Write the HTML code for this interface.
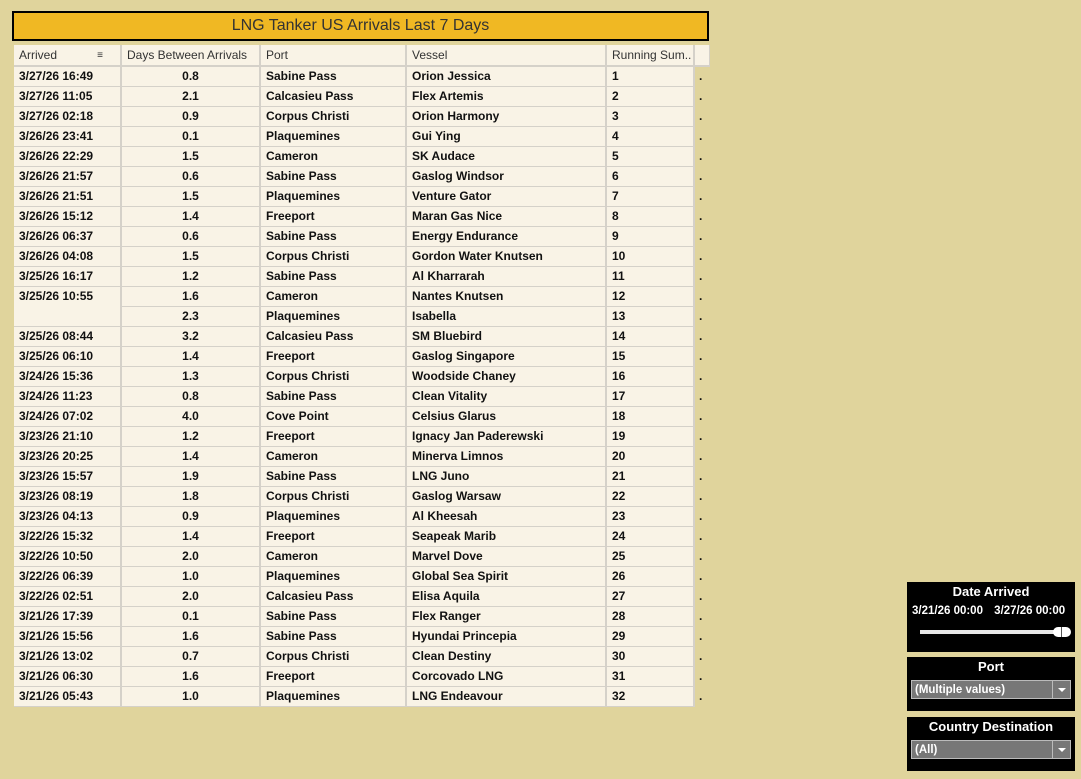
<!DOCTYPE html>
<html><head><meta charset="utf-8"><style>
*{margin:0;padding:0;box-sizing:border-box}
body{width:1081px;height:779px;background:#e0d49c;font-family:"Liberation Sans",sans-serif;position:relative;overflow:hidden}
.title{position:absolute;left:12px;top:11px;width:697px;height:30px;background:#f0b823;border:2px solid #000;text-align:center;font-size:16px;line-height:26px;color:#333}
table{position:absolute;left:14px;top:45px;border-collapse:collapse;table-layout:fixed;width:695px}
td{height:20px;border:1px solid #d5d1c9;border-width:0 2px 1px 0;background:#f9f3e6;font-size:12px;font-weight:bold;color:#111;padding:0 5px;white-space:nowrap;overflow:hidden;line-height:19px}
tr.h td{font-weight:normal;color:#333;height:21px;border-bottom:2px solid #d5d1c9}
td.c{text-align:center}
td.x{background:#e0d49c;border:0;padding:0 0 0 4px;font-weight:bold}
tr.h td.x{background:#f9f3e6;border-right:1px solid #d5d1c9}
.box{position:absolute;left:907px;width:168px;background:#000;color:#fff;font-weight:bold}
.box .t{text-align:center;font-size:13px;margin-top:2px}
.sel{position:absolute;left:4px;right:4px;height:19px;background:#777;border:1px solid #bbb;font-size:11.5px;line-height:19px;padding-left:3px;color:#fff}
.sel .a{position:absolute;right:0;top:0;width:18px;height:17px;border-left:1px solid #bbb}
.sel .a:after{content:"";position:absolute;left:5px;top:7px;border:4px solid transparent;border-top:4px solid #fff}
</style></head><body>
<div class="title">LNG Tanker US Arrivals Last 7 Days</div>
<table>
<colgroup><col style="width:107px"><col style="width:139px"><col style="width:146px"><col style="width:200px"><col style="width:88px"><col style="width:15px"></colgroup>
<tr class="h"><td>Arrived<span style="float:right;margin-right:12px;font-size:10px">&#8801;</span></td><td>Days Between Arrivals</td><td>Port</td><td>Vessel</td><td>Running Sum..</td><td class="x"></td></tr>
<tr><td>3/27/26 16:49</td><td class="c">0.8</td><td>Sabine Pass</td><td>Orion Jessica</td><td>1</td><td class="x">.</td></tr>
<tr><td>3/27/26 11:05</td><td class="c">2.1</td><td>Calcasieu Pass</td><td>Flex Artemis</td><td>2</td><td class="x">.</td></tr>
<tr><td>3/27/26 02:18</td><td class="c">0.9</td><td>Corpus Christi</td><td>Orion Harmony</td><td>3</td><td class="x">.</td></tr>
<tr><td>3/26/26 23:41</td><td class="c">0.1</td><td>Plaquemines</td><td>Gui Ying</td><td>4</td><td class="x">.</td></tr>
<tr><td>3/26/26 22:29</td><td class="c">1.5</td><td>Cameron</td><td>SK Audace</td><td>5</td><td class="x">.</td></tr>
<tr><td>3/26/26 21:57</td><td class="c">0.6</td><td>Sabine Pass</td><td>Gaslog Windsor</td><td>6</td><td class="x">.</td></tr>
<tr><td>3/26/26 21:51</td><td class="c">1.5</td><td>Plaquemines</td><td>Venture Gator</td><td>7</td><td class="x">.</td></tr>
<tr><td>3/26/26 15:12</td><td class="c">1.4</td><td>Freeport</td><td>Maran Gas Nice</td><td>8</td><td class="x">.</td></tr>
<tr><td>3/26/26 06:37</td><td class="c">0.6</td><td>Sabine Pass</td><td>Energy Endurance</td><td>9</td><td class="x">.</td></tr>
<tr><td>3/26/26 04:08</td><td class="c">1.5</td><td>Corpus Christi</td><td>Gordon Water Knutsen</td><td>10</td><td class="x">.</td></tr>
<tr><td>3/25/26 16:17</td><td class="c">1.2</td><td>Sabine Pass</td><td>Al Kharrarah</td><td>11</td><td class="x">.</td></tr>
<tr><td rowspan="2" style="vertical-align:top">3/25/26 10:55</td><td class="c">1.6</td><td>Cameron</td><td>Nantes Knutsen</td><td>12</td><td class="x">.</td></tr>
<tr><td class="c">2.3</td><td>Plaquemines</td><td>Isabella</td><td>13</td><td class="x">.</td></tr>
<tr><td>3/25/26 08:44</td><td class="c">3.2</td><td>Calcasieu Pass</td><td>SM Bluebird</td><td>14</td><td class="x">.</td></tr>
<tr><td>3/25/26 06:10</td><td class="c">1.4</td><td>Freeport</td><td>Gaslog Singapore</td><td>15</td><td class="x">.</td></tr>
<tr><td>3/24/26 15:36</td><td class="c">1.3</td><td>Corpus Christi</td><td>Woodside Chaney</td><td>16</td><td class="x">.</td></tr>
<tr><td>3/24/26 11:23</td><td class="c">0.8</td><td>Sabine Pass</td><td>Clean Vitality</td><td>17</td><td class="x">.</td></tr>
<tr><td>3/24/26 07:02</td><td class="c">4.0</td><td>Cove Point</td><td>Celsius Glarus</td><td>18</td><td class="x">.</td></tr>
<tr><td>3/23/26 21:10</td><td class="c">1.2</td><td>Freeport</td><td>Ignacy Jan Paderewski</td><td>19</td><td class="x">.</td></tr>
<tr><td>3/23/26 20:25</td><td class="c">1.4</td><td>Cameron</td><td>Minerva Limnos</td><td>20</td><td class="x">.</td></tr>
<tr><td>3/23/26 15:57</td><td class="c">1.9</td><td>Sabine Pass</td><td>LNG Juno</td><td>21</td><td class="x">.</td></tr>
<tr><td>3/23/26 08:19</td><td class="c">1.8</td><td>Corpus Christi</td><td>Gaslog Warsaw</td><td>22</td><td class="x">.</td></tr>
<tr><td>3/23/26 04:13</td><td class="c">0.9</td><td>Plaquemines</td><td>Al Kheesah</td><td>23</td><td class="x">.</td></tr>
<tr><td>3/22/26 15:32</td><td class="c">1.4</td><td>Freeport</td><td>Seapeak Marib</td><td>24</td><td class="x">.</td></tr>
<tr><td>3/22/26 10:50</td><td class="c">2.0</td><td>Cameron</td><td>Marvel Dove</td><td>25</td><td class="x">.</td></tr>
<tr><td>3/22/26 06:39</td><td class="c">1.0</td><td>Plaquemines</td><td>Global Sea Spirit</td><td>26</td><td class="x">.</td></tr>
<tr><td>3/22/26 02:51</td><td class="c">2.0</td><td>Calcasieu Pass</td><td>Elisa Aquila</td><td>27</td><td class="x">.</td></tr>
<tr><td>3/21/26 17:39</td><td class="c">0.1</td><td>Sabine Pass</td><td>Flex Ranger</td><td>28</td><td class="x">.</td></tr>
<tr><td>3/21/26 15:56</td><td class="c">1.6</td><td>Sabine Pass</td><td>Hyundai Princepia</td><td>29</td><td class="x">.</td></tr>
<tr><td>3/21/26 13:02</td><td class="c">0.7</td><td>Corpus Christi</td><td>Clean Destiny</td><td>30</td><td class="x">.</td></tr>
<tr><td>3/21/26 06:30</td><td class="c">1.6</td><td>Freeport</td><td>Corcovado LNG</td><td>31</td><td class="x">.</td></tr>
<tr><td>3/21/26 05:43</td><td class="c">1.0</td><td>Plaquemines</td><td>LNG Endeavour</td><td>32</td><td class="x">.</td></tr>
</table>

<div class="box" style="top:582px;height:70px">
<div class="t">Date Arrived</div>
<div style="font-size:11.5px;margin:6px 0 0 5px;word-spacing:0">3/21/26 00:00 <span style="margin-left:8px">3/27/26 00:00</span></div>
<div style="position:absolute;left:13px;top:48px;width:140px;height:4px;background:#e8e8e8"></div>
<div style="position:absolute;left:146px;top:45px;width:18px;height:10px;background:#fff;border-radius:5px"><div style="position:absolute;left:8px;top:0;width:1px;height:10px;background:#555"></div></div>
</div>
<div class="box" style="top:657px;height:54px">
<div class="t">Port</div>
<div class="sel" style="top:23px">(Multiple values)<span class="a"></span></div>
</div>
<div class="box" style="top:717px;height:54px">
<div class="t">Country Destination</div>
<div class="sel" style="top:23px">(All)<span class="a"></span></div>
</div>
</body></html>
